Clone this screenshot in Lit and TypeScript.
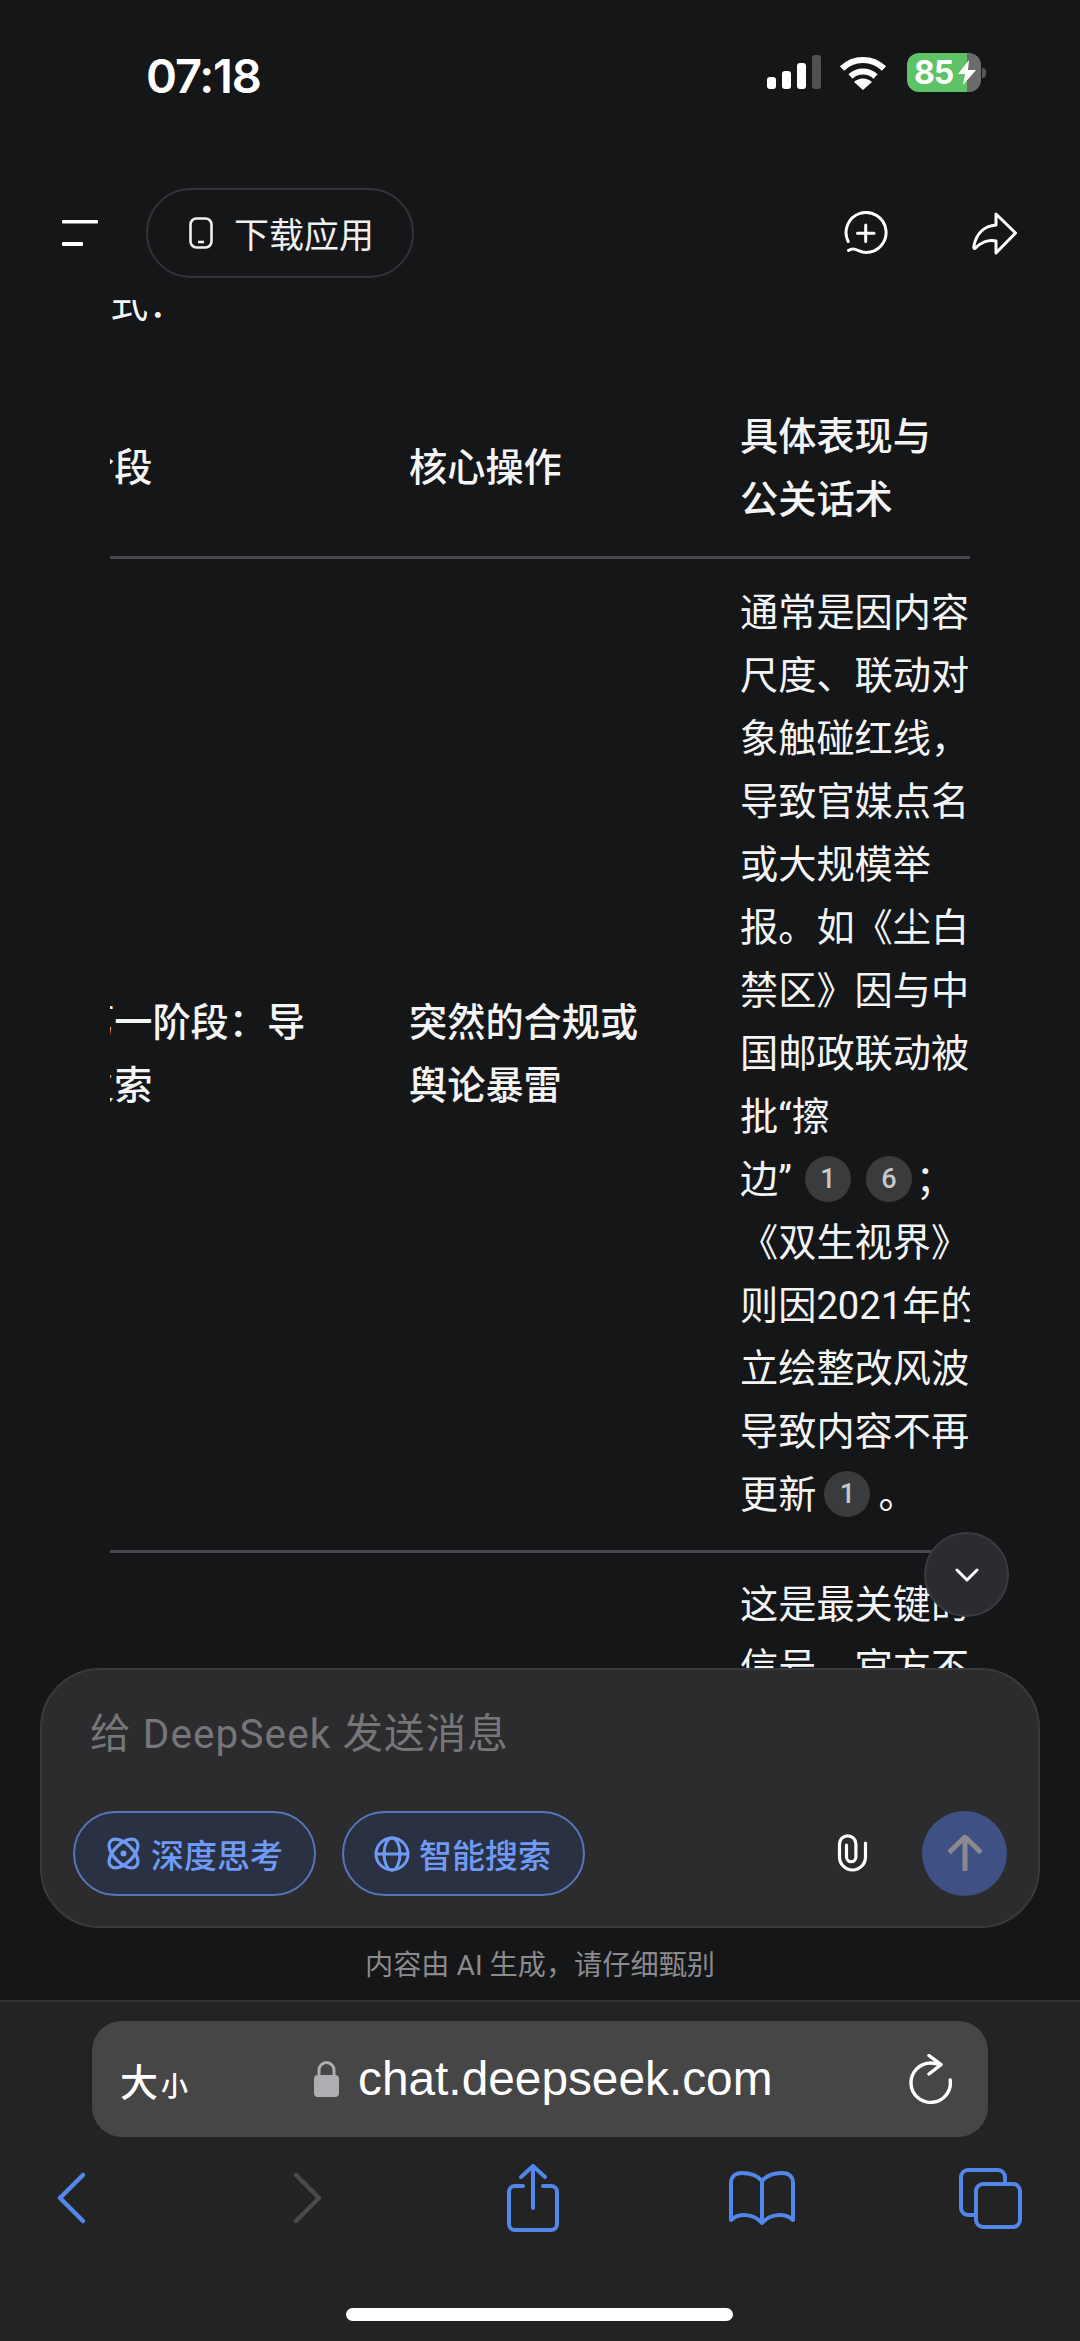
import { LitElement, html, css } from "lit";
import { customElement } from "lit/decorators.js";

@customElement("app-root")
export class AppRoot extends LitElement {
  static styles = css`
    :host {
      display: flex;
      flex-direction: column;
      width: 1080px;
      height: 2341px;
      overflow: hidden;
      background: #151618;
      color: #f4f4f4;
      font-family: Roboto, "Noto Sans CJK SC", sans-serif;
    }
    svg { display: block; flex: none; }

    .status {
      height: 188px;
      flex: none;
      box-sizing: border-box;
      padding: 53px 94px 0 146px;
      display: flex;
      align-items: flex-start;
    }
    .time {
      font: 600 47px/40px Inter, Roboto, sans-serif;
      letter-spacing: -1.2px;
      color: #fff;
      margin-top: 3px;
    }
    .signal { display: flex; align-items: flex-end; gap: 6px; height: 34px; margin: 2px 0 0 auto; }
    .signal i { display: block; width: 9px; background: #fff; border-radius: 3px; }
    .signal i.b1 { height: 12px; }
    .signal i.b2 { height: 18px; }
    .signal i.b3 { height: 26px; }
    .signal i.b4 { height: 34px; background: #505153; }
    .wifi { margin: 2px 0 0 18px; }
    .battery {
      margin-left: 20px;
      width: 74px;
      height: 39px;
      border-radius: 12px;
      background: linear-gradient(to right, #5ec267 60px, #6b6b6c 60px);
      display: flex;
      align-items: center;
      padding-left: 7px;
      box-sizing: border-box;
      font: 700 32px/39px Inter, Roboto, sans-serif;
      color: #fff;
    }
    .battery span { letter-spacing: -1px; width: 44px; }
    .knob { width: 4px; height: 10px; margin: 15px 0 0 1px; background: #565657; border-radius: 0 4px 4px 0; }

    .header {
      height: 112px;
      flex: none;
      box-sizing: border-box;
      padding: 0 63px 22px 62px;
      display: flex;
      align-items: center;
    }
    .menu { margin-right: 48px; }
    .dl {
      box-sizing: border-box;
      width: 268px;
      height: 90px;
      border: 2px solid #323336;
      border-radius: 45px;
      display: flex;
      align-items: center;
      gap: 21px;
      padding-left: 41px;
      font-size: 35px;
      color: #f0f0f0;
    }
    .dl span { margin-top: -2px; }
    .newchat { margin-left: auto; }
    .share { margin-left: 84px; }

    .content {
      flex: 1;
      min-height: 0;
      overflow: hidden;
      position: relative;
      padding: 0 110px;
      font-size: 38.2px;
      line-height: 63px;
    }
    .lead { margin: -27px 0 45.5px; }
    .tablewrap { overflow: hidden; width: 860px; }
    table {
      border-collapse: collapse;
      table-layout: fixed;
      width: 924px;
      margin-left: -34px;
    }
    col.c1 { width: 333px; }
    col.c2 { width: 331px; }
    col.c3 { width: 260px; }
    th, td {
      text-align: left;
      vertical-align: middle;
      white-space: nowrap;
      font-weight: 400;
    }
    th { padding: 24px 0 24px; }
    td { padding: 23.5px 0 22.5px; }
    tr { border-bottom: 3px solid #47484b; }
    tr:last-child { border-bottom: none; }
    tr:last-child td { padding-top: 21px; }
    th, td.strong { font-weight: 500; }
    .cite {
      display: inline-block;
      width: 46px;
      height: 46px;
      border-radius: 50%;
      background: #3a3b3d;
      color: #c8c8c8;
      font: 500 27px/46px Roboto, sans-serif;
      text-align: center;
      vertical-align: 5px;
      margin: 0 8px;
    }
    .cite.a { margin-left: 13px; }
    .cite.b { margin: 0 4px 0 7px; }
    .scrolldown {
      position: absolute;
      right: 71px;
      bottom: 51px;
      width: 85px;
      height: 85px;
      box-sizing: border-box;
      border-radius: 50%;
      background: #2b2c2f;
      border: 2px solid #3a3b3e;
      display: flex;
      align-items: center;
      justify-content: center;
    }

    .composer {
      flex: none;
      box-sizing: border-box;
      width: 1000px;
      height: 260px;
      margin-left: 40px;
      border: 2px solid #3a3a3c;
      border-radius: 60px;
      background: #2c2c2e;
      padding: 31px 31px 30px 31px;
    }
    .placeholder {
      height: 64px;
      line-height: 66px;
      margin: 0 0 46px 17px;
      font-size: 40.5px;
      letter-spacing: 1.1px;
      color: #767679;
    }
    .actions { display: flex; align-items: center; }
    .pill {
      box-sizing: border-box;
      width: 243px;
      height: 85px;
      border: 2.5px solid #5874ba;
      border-radius: 43px;
      background: #2a3142;
      color: #6f9af6;
      font-size: 33px;
      font-weight: 500;
      display: flex;
      align-items: center;
      padding-left: 32px;
      gap: 11px;
    }
    .pill + .pill { margin-left: 26px; padding-left: 30px; gap: 9px; }
    .clip { margin-left: auto; margin-right: 54px; }
    .send {
      width: 85px;
      height: 85px;
      border-radius: 50%;
      background: #3f5184;
      display: flex;
      align-items: center;
      justify-content: center;
    }
    .note {
      flex: none;
      height: 72px;
      line-height: 76px;
      text-align: center;
      font-size: 28.2px;
      color: #8b8b8e;
    }

    .safari {
      flex: none;
      height: 341px;
      background: #232323;
      border-top: 2px solid #343436;
      padding-top: 19px;
      box-sizing: border-box;
    }
    .url {
      box-sizing: border-box;
      width: 896px;
      height: 116px;
      margin-left: 92px;
      border-radius: 30px;
      background: #464646;
      display: flex;
      align-items: center;
      padding: 0 36px 0 28px;
      color: #fff;
    }
    .size { font-size: 38px; font-weight: 500; display: flex; align-items: baseline; }
    .size small { font-size: 27px; margin-left: 3px; font-weight: 500; }
    .site { margin-left: 126px; display: flex; align-items: center; gap: 19px; font: 400 47.8px/62px "Liberation Sans", Roboto, sans-serif; }
    .reload { margin-left: auto; }
    .toolbar { height: 122px; display: flex; align-items: center; padding-left: 57px; }
    .fwd { margin-left: 208px; }
    .up { margin-left: 185px; }
    .book { margin-left: 170px; }
    .tabs { margin-left: 164px; }
    .home {
      width: 387px;
      height: 13px;
      border-radius: 7px;
      background: #fff;
      margin: 49px 0 0 346px;
    }
  `;

  render() {
    return html`
      <div class="status">
        <div class="time">07:18</div>
        <div class="signal"><i class="b1"></i><i class="b2"></i><i class="b3"></i><i class="b4"></i></div>
        <svg class="wifi" width="48" height="35" viewBox="0 0 48 35" fill="none" stroke="#fff" stroke-width="6">
          <path d="M3 13.5A30 30 0 0 1 45 13.5" />
          <path d="M11.5 21.5A18 18 0 0 1 36.5 21.5" />
          <path d="M24 35L15 27A13 13 0 0 1 33 27Z" fill="#fff" stroke="none" />
        </svg>
        <div class="battery">
          <span>85</span>
          <svg width="18" height="25" viewBox="0 0 18 25"><path d="M11 0L0 14H7L5 25L18 10H10Z" fill="#fff" /></svg>
        </div>
        <div class="knob"></div>
      </div>

      <div class="header">
        <svg class="menu" width="36" height="26" viewBox="0 0 36 26" fill="#fff">
          <rect x="0" y="0" width="36" height="3.5" rx="1" />
          <rect x="0" y="22" width="21" height="4" rx="1" />
        </svg>
        <div class="dl">
          <svg width="24" height="32" viewBox="0 0 24 32" fill="none" stroke="#f0f0f0" stroke-width="2.6">
            <rect x="1.5" y="1.5" width="21" height="29" rx="6" />
            <path d="M9 25H15" />
          </svg>
          <span>下载应用</span>
        </div>
        <svg class="newchat" width="45" height="45" viewBox="0 0 45 45" fill="none" stroke="#fff" stroke-width="3" stroke-linecap="round">
          <path d="M5.2 30.5A20 20 0 1 1 22.7 41.5C17.5 41.5 14 38 10 38C8 38 7 38.5 5.5 39.5" />
          <path d="M22.7 14V30.5M14.5 22.3H31" />
        </svg>
        <svg class="share" width="45" height="43" viewBox="0 0 45 43" fill="none" stroke="#fff" stroke-width="3" stroke-linejoin="round">
          <path d="M24 2L43.5 21L24 41V29C16 27 8 31 3.5 36C2.2 37.4 1.5 36 1.8 34.5C4 22 12 14 24 13Z" />
        </svg>
      </div>

      <div class="content">
        <div class="lead">式：</div>
        <div class="tablewrap">
          <table>
            <colgroup><col class="c1" /><col class="c2" /><col class="c3" /></colgroup>
            <tr>
              <th>阶段</th>
              <th>核心操作</th>
              <th>具体表现与<br />公关话术</th>
            </tr>
            <tr>
              <td class="strong">第一阶段：导<br />火索</td>
              <td class="strong">突然的合规或<br />舆论暴雷</td>
              <td>
                通常是因内容<br />尺度、联动对<br />象触碰红线，<br />导致官媒点名<br />或大规模举<br />报。如《尘白<br />禁区》因与中<br />国邮政联动被<br />批“擦<br />边”<span class="cite a">1</span><span class="cite b">6</span>；<br />《双生视界》<br />则因2021年的<br />立绘整改风波<br />导致内容不再<br />更新<span class="cite">1</span>。
              </td>
            </tr>
            <tr>
              <td></td>
              <td></td>
              <td>这是最关键的<br />信号，官方不</td>
            </tr>
          </table>
        </div>
        <div class="scrolldown">
          <svg width="24" height="14" viewBox="0 0 24 14" fill="none" stroke="#fff" stroke-width="3" stroke-linecap="round" stroke-linejoin="round">
            <path d="M2 2L12 12L22 2" />
          </svg>
        </div>
      </div>

      <div class="composer">
        <div class="placeholder">给 DeepSeek 发送消息</div>
        <div class="actions">
          <div class="pill">
            <svg width="33" height="33" viewBox="0 0 33 33" fill="none" stroke="#6f9af6" stroke-width="3.2">
              <ellipse cx="16.5" cy="16.5" rx="18" ry="9.5" transform="rotate(45 16.5 16.5)" />
              <ellipse cx="16.5" cy="16.5" rx="18" ry="9.5" transform="rotate(-45 16.5 16.5)" />
              <circle cx="16.5" cy="16.5" r="3" fill="#6f9af6" stroke="none" />
            </svg>
            <span>深度思考</span>
          </div>
          <div class="pill">
            <svg width="36" height="36" viewBox="0 0 36 36" fill="none" stroke="#6f9af6" stroke-width="3">
              <circle cx="18" cy="18" r="16" />
              <ellipse cx="18" cy="18" rx="8" ry="16" />
              <path d="M2 18H34" />
            </svg>
            <span>智能搜索</span>
          </div>
          <svg class="clip" width="31" height="39" viewBox="0 0 31 39" fill="none" stroke="#fff" stroke-width="3.2" stroke-linecap="round">
            <path d="M28.5 9V23A13 13 0 0 1 2.5 23V10A8.2 8.2 0 0 1 18.9 10V23A4.7 4.7 0 0 1 9.5 23V11" />
          </svg>
          <div class="send">
            <svg width="36" height="38" viewBox="0 0 36 38" fill="none" stroke="#8a8a8c" stroke-width="5">
              <path d="M18 2V36M2 17.5L18 2L34 17.5" />
            </svg>
          </div>
        </div>
      </div>

      <div class="note">内容由 AI 生成，请仔细甄别</div>

      <div class="safari">
        <div class="url">
          <div class="size">大<small>小</small></div>
          <div class="site">
            <svg width="25" height="36" viewBox="0 0 25 36">
              <path d="M5 15V9A7.5 7.5 0 0 1 20 9V15" fill="none" stroke="#aeaeb2" stroke-width="3" />
              <rect x="0" y="14" width="25" height="22" rx="4" fill="#aeaeb2" />
            </svg>
            <span>chat.deepseek.com</span>
          </div>
          <svg class="reload" width="43" height="50" viewBox="0 0 43 50" fill="none" stroke="#fff" stroke-width="3.4" stroke-linecap="round" stroke-linejoin="round">
            <path d="M31 10.7C28 9.5 25 9 21.7 9A19.7 19.7 0 1 0 41.2 26" />
            <path d="M20 1.5L32 10.7L20 20" />
          </svg>
        </div>
        <div class="toolbar">
          <svg width="28" height="52" viewBox="0 0 28 52" fill="none" stroke="#5286ea" stroke-width="4.5" stroke-linecap="round" stroke-linejoin="round">
            <path d="M26 3L3 26L26 49" />
          </svg>
          <svg class="fwd" width="29" height="52" viewBox="0 0 29 52" fill="none" stroke="#4a4a4c" stroke-width="4.5" stroke-linecap="round" stroke-linejoin="round">
            <path d="M3 3L26 26L3 49" />
          </svg>
          <svg class="up" width="52" height="68" viewBox="0 0 52 68" fill="none" stroke="#5286ea" stroke-width="4" stroke-linecap="round" stroke-linejoin="round">
            <path d="M16 22H8A6 6 0 0 0 2 28V60A6 6 0 0 0 8 66H44A6 6 0 0 0 50 60V28A6 6 0 0 0 44 22H36" />
            <path d="M26 44V2M14 13L26 2L38 13" />
          </svg>
          <svg class="book" width="66" height="55" viewBox="0 0 66 55" fill="none" stroke="#5286ea" stroke-width="4" stroke-linecap="round" stroke-linejoin="round">
            <path d="M33 10C28 4 20 2 13 2C6 2 2 6 2 12V49C10 42 24 42 33 52C42 42 56 42 64 49V12C64 6 60 2 53 2C46 2 38 4 33 10V52" />
          </svg>
          <svg class="tabs" width="63" height="61" viewBox="0 0 63 61" fill="none" stroke="#5286ea" stroke-width="4">
            <rect x="17" y="16" width="44" height="43" rx="7" />
            <path d="M15 47H9A7 7 0 0 1 2 40V9A7 7 0 0 1 9 2H39A7 7 0 0 1 46 9V15" />
          </svg>
        </div>
        <div class="home"></div>
      </div>
    `;
  }
}
